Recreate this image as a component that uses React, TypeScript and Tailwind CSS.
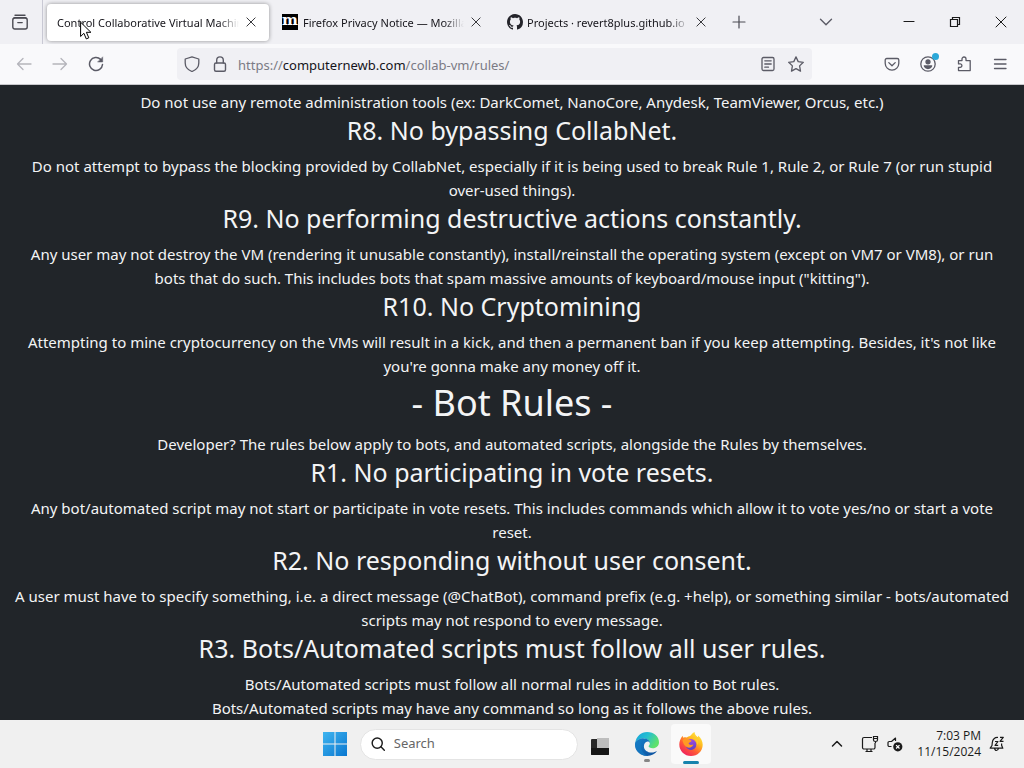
import React from "react";

type Rule = { title: string; lines: string[] };

const userRules: Rule[] = [
  {
    title: "R8. No bypassing CollabNet.",
    lines: [
      "Do not attempt to bypass the blocking provided by CollabNet, especially if it is being used to break Rule 1, Rule 2, or Rule 7 (or run stupid",
      "over-used things).",
    ],
  },
  {
    title: "R9. No performing destructive actions constantly.",
    lines: [
      "Any user may not destroy the VM (rendering it unusable constantly), install/reinstall the operating system (except on VM7 or VM8), or run",
      "bots that do such. This includes bots that spam massive amounts of keyboard/mouse input (\"kitting\").",
    ],
  },
  {
    title: "R10. No Cryptomining",
    lines: [
      "Attempting to mine cryptocurrency on the VMs will result in a kick, and then a permanent ban if you keep attempting. Besides, it's not like",
      "you're gonna make any money off it.",
    ],
  },
];

const botRules: Rule[] = [
  {
    title: "R1. No participating in vote resets.",
    lines: [
      "Any bot/automated script may not start or participate in vote resets. This includes commands which allow it to vote yes/no or start a vote",
      "reset.",
    ],
  },
  {
    title: "R2. No responding without user consent.",
    lines: [
      "A user must have to specify something, i.e. a direct message (@ChatBot), command prefix (e.g. +help), or something similar - bots/automated",
      "scripts may not respond to every message.",
    ],
  },
  {
    title: "R3. Bots/Automated scripts must follow all user rules.",
    lines: [
      "Bots/Automated scripts must follow all normal rules in addition to Bot rules.",
      "Bots/Automated scripts may have any command so long as it follows the above rules.",
    ],
  },
];

function Icon({ children, className = "size-4", sw = 1.3 }: { children: React.ReactNode; className?: string; sw?: number }) {
  return (
    <svg viewBox="0 0 16 16" className={className} fill="none" stroke="currentColor" strokeWidth={sw} strokeLinecap="round" strokeLinejoin="round" aria-hidden="true">
      {children}
    </svg>
  );
}

function CloseIcon() {
  return (
    <Icon className="size-3" sw={1.3}>
      <path d="M2.5 2.5l11 11M13.5 2.5l-11 11" />
    </Icon>
  );
}

function Tab({ title, icon, active = false }: { title: string; icon?: React.ReactNode; active?: boolean }) {
  return (
    <div
      className={
        active
          ? "flex h-[37px] w-[222px] items-center rounded bg-white pr-3 pl-[10px] shadow-[0_0_4px_rgba(0,0,0,0.4)]"
          : "flex h-[37px] w-[225px] items-center pr-3 pl-[13px]"
      }
    >
      {icon}
      <button className="min-w-0 flex-1 overflow-hidden pt-[2px] text-left text-[11px] whitespace-nowrap [mask-image:linear-gradient(to_left,transparent,black_20px)]">
        {title}
      </button>
      <button aria-label={"Close " + title} className="ml-[6px] text-[#333338]">
        <CloseIcon />
      </button>
    </div>
  );
}

function MozillaLogo() {
  return (
    <span aria-hidden="true" className="mr-[5px] flex size-4 shrink-0 items-center justify-center bg-black pb-[3px] font-['DejaVu_Serif',serif] text-[15px] leading-none font-bold text-white">
      m
    </span>
  );
}

function GithubLogo() {
  return (
    <svg viewBox="0 0 16 16" className="mr-1 size-4 shrink-0" fill="#24242b" aria-hidden="true">
      <path d="M8 0C3.58 0 0 3.58 0 8c0 3.54 2.29 6.53 5.47 7.59.4.07.55-.17.55-.38 0-.19-.01-.82-.01-1.49-2.01.37-2.53-.49-2.69-.94-.09-.23-.48-.94-.82-1.13-.28-.15-.68-.52-.01-.53.63-.01 1.08.58 1.23.82.72 1.21 1.87.87 2.33.66.07-.52.28-.87.51-1.07-1.78-.2-3.64-.89-3.64-3.95 0-.87.31-1.59.82-2.15-.08-.2-.36-1.02.08-2.12 0 0 .67-.21 2.2.82.64-.18 1.32-.27 2-.27s1.36.09 2 .27c1.53-1.04 2.2-.82 2.2-.82.44 1.1.16 1.92.08 2.12.51.56.82 1.27.82 2.15 0 3.07-1.87 3.75-3.65 3.95.29.25.54.73.54 1.48 0 1.07-.01 1.93-.01 2.2 0 .21.15.46.55.38A8.01 8.01 0 0 0 16 8c0-4.42-3.58-8-8-8z" />
    </svg>
  );
}

function TabStrip() {
  return (
    <div className="flex h-11 shrink-0 items-center bg-[#f0f0f4] text-[#15141a]">
      <div className="flex h-full w-[43px] shrink-0 items-center justify-center border-r border-[#c9c9d4] pr-[2px] text-[#4a4a52]">
        <button aria-label="Firefox View">
          <Icon sw={1.4}>
            <path d="M3 1.2h10" />
            <rect x="0.8" y="4" width="14.4" height="11" rx="2" />
            <path d="M1.5 4.5Q2 3.6 3 3.6h10Q14 3.6 14.5 4.5M5.8 8.6h4.4" />
          </Icon>
        </button>
      </div>
      <div className="ml-1 flex">
        <Tab title="Control Collaborative Virtual Machines" active />
        <Tab title="Firefox Privacy Notice — Mozilla" icon={<MozillaLogo />} />
        <Tab title="Projects · revert8plus.github.io" icon={<GithubLogo />} />
      </div>
      <button aria-label="New tab" className="ml-3 text-[#4a4a52]">
        <Icon className="size-4" sw={1.2}>
          <path d="M2 8h12M8 2v12" />
        </Icon>
      </button>
      <div className="flex flex-1 items-center justify-end text-[#1a1a1a]">
        <button aria-label="List all tabs" className="mr-[67px] text-[#5b5b66]">
          <Icon sw={1.4}>
            <path d="M2.5 5.2L8 10.7l5.500-5.500" />
          </Icon>
        </button>
        <button aria-label="Minimize" className="mr-[30px]">
          <Icon sw={1.2}>
            <path d="M3 7.500h10" />
          </Icon>
        </button>
        <button aria-label="Restore" className="mr-[30px]">
          <Icon sw={1.2}>
            <path d="M3.500 5.500h7v7h-7zM5.500 5.500v-2h7v7h-2" strokeLinejoin="miter" />
          </Icon>
        </button>
        <button aria-label="Close window" className="mr-[15px]">
          <Icon sw={1}>
            <path d="M3 3l10 10M13 3L3 13" />
          </Icon>
        </button>
      </div>
    </div>
  );
}

function NavBar() {
  return (
    <div className="flex h-[41px] shrink-0 items-center border-b border-[#c8c8cc] bg-[#f9f9fb] text-[#5b5b66]">
      <button aria-label="Back" className="ml-4 text-[#b5b5bb]">
        <Icon>
          <path d="M15 8H1.500M7 2.500L1.500 8L7 13.500" />
        </Icon>
      </button>
      <button aria-label="Forward" className="ml-5 text-[#b5b5bb]">
        <Icon>
          <path d="M1 8h13.500M9 2.500L14.500 8L9 13.500" />
        </Icon>
      </button>
      <button aria-label="Reload" className="ml-5">
        <Icon sw={1.5}>
          <path d="M14.500 8.500A6.500 6.500 0 1 1 12.600 3.400" />
          <path d="M14.700 1.200v4.800H9.900z" fill="currentColor" strokeWidth={0.5} />
        </Icon>
      </button>
      <div className="ml-[73px] flex h-8 flex-1 items-center rounded bg-[#f0f0f4] pr-2 pl-[7px]">
        <button aria-label="Tracking protection">
          <Icon>
            <path d="M8 .8L14.800 3v4c0 4-2.900 7-6.800 8.500C4.100 14 1.200 11 1.200 7V3z" />
          </Icon>
        </button>
        <button aria-label="Site information" className="ml-3">
          <Icon sw={1.4}>
            <rect x="2.500" y="7" width="11" height="8.200" rx="1.500" />
            <path d="M4.700 7V4.200a3.300 3.300 0 0 1 6.600 0V7" />
          </Icon>
        </button>
        <div className="ml-[10px] flex-1 pt-[3px] text-[13px] whitespace-nowrap text-[#7b7b85]">
          https://<span className="text-[#15141a]">computernewb.com</span>/collab-vm/rules/
        </div>
        <button aria-label="Reader view">
          <Icon>
            <rect x="2" y="1.500" width="12" height="13" rx="1.500" />
            <path d="M4.800 4.800h6.400M4.800 8h6.400M4.800 11.200h3.700" />
          </Icon>
        </button>
        <button aria-label="Bookmark this page" className="ml-3">
          <Icon>
            <path d="M8 .9l2.200 4.700 5.100.7-3.700 3.600.9 5.200L8 12.600l-4.500 2.500.9-5.200L.7 6.300l5.100-.7z" />
          </Icon>
        </button>
      </div>
      <button aria-label="Save to Pocket" className="ml-[72px]">
        <Icon>
          <path d="M2.800 2.500h10.400a1.600 1.600 0 0 1 1.600 1.600v3.200a6.800 6.800 0 0 1-13.600 0V4.100a1.600 1.600 0 0 1 1.600-1.600zM4.800 6.600L8 9.700l3.200-3.100" />
        </Icon>
      </button>
      <button aria-label="Account" className="relative ml-5">
        <Icon>
          <circle cx="8" cy="8" r="7.200" />
          <circle cx="8" cy="5.800" r="2" fill="currentColor" />
          <path d="M4.300 9.900h7.400Q10.800 12.500 8 12.500T4.300 9.900z" fill="currentColor" />
        </Icon>
        <span className="absolute -top-[3px] -right-[3px] size-[7px] rounded-full bg-[#2ba8d8]" />
      </button>
      <button aria-label="Extensions" className="ml-5">
        <Icon>
          <path d="M6 4.600V3a2 2 0 0 1 4 0v1.600h4.200v10H2.500v-3.300h1.700a1.700 1.700 0 0 0 0-3.400H2.500V4.600z" />
        </Icon>
      </button>
      <button aria-label="Menu" className="mr-4 ml-5">
        <Icon>
          <path d="M2.500 3.500h11.500M2.500 8h11.500M2.500 12.500h11.500" />
        </Icon>
      </button>
    </div>
  );
}

function RuleBlock({ title, lines }: Rule) {
  return (
    <section>
      <h3 className="mb-2 text-[25px] leading-8">{title}</h3>
      <p>
        {lines[0]}
        <br />
        {lines[1]}
      </p>
    </section>
  );
}

function Taskbar() {
  return (
    <footer className="flex h-12 shrink-0 items-center bg-[#f0f0f0] text-[#1b1b1b]">
      <button aria-label="Start" className="ml-[31.500%]">
        <svg viewBox="0 0 24 24" className="size-6" aria-hidden="true">
          <defs>
            <linearGradient id="win" x1="0" y1="0" x2="1" y2="1" gradientUnits="objectBoundingBox">
              <stop offset="0" stopColor="#3fb5f0" />
              <stop offset="1" stopColor="#0a77d0" />
            </linearGradient>
          </defs>
          <path d="M0 0h11.500v11.500H0zM12.500 0H24v11.500H12.500zM0 12.500h11.500V24H0zM12.500 12.500H24V24H12.500z" fill="url(#win)" />
        </svg>
      </button>
      <label className="ml-[13px] flex h-[31px] w-[218px] items-center rounded-full border border-[#e4e4e4] bg-white pl-[10px]">
        <Icon sw={1.6}>
          <circle cx="7" cy="7" r="5.700" />
          <path d="M11.200 11.200l3.800 3.800" />
        </Icon>
        <input aria-label="Search" placeholder="Search" className="ml-[9px] w-full min-w-0 bg-transparent text-[13px] outline-none placeholder:text-[#666]" />
      </label>
      <button aria-label="Task view" className="ml-[13px] pt-1">
        <svg viewBox="0 0 18 17" className="h-[17px] w-[18px]" aria-hidden="true">
          <rect y="1" width="18" height="16" rx="1" fill="#272727" />
          <path d="M6 0h12v10H6z" fill="#bdbdbd" />
          <path d="M0 10h18v6a1 1 0 0 1-1 1H1a1 1 0 0 1-1-1z" fill="#161616" />
        </svg>
      </button>
      <button aria-label="Microsoft Edge" className="relative ml-[26px]">
        <svg viewBox="0 0 24 24" className="size-6" aria-hidden="true">
          <defs>
            <linearGradient id="edgeTop" x1="0" y1="0" x2="1" y2="0.500">
              <stop offset="0" stopColor="#149fdc" />
              <stop offset="0.500" stopColor="#25bfd0" />
              <stop offset="1" stopColor="#5ee26a" />
            </linearGradient>
            <linearGradient id="edgeLow" x1="0" y1="0" x2="1" y2="1">
              <stop offset="0" stopColor="#1681cb" />
              <stop offset="1" stopColor="#0c4d9b" />
            </linearGradient>
          </defs>
          <path d="M.2 11C1 4.500 6 0 12.200 0 19 0 24 4.800 24 10.200c0 3.600-2.700 6-6.200 6-2.600 0-4.200-1-4.200-1.900 0-.5 1.200-1.100 1.200-3 0-2.600-2.700-4.800-6.200-4.800C4.600 6.500 1.200 8.600.2 11z" fill="url(#edgeTop)" />
          <path d="M.2 11C1.200 8.600 4.600 6.500 8.800 6.500c3.500 0 6 2 6.200 4.600-.3-1-1.300-1.700-2.500-1.700-2 0-3.600 2.200-3.600 4.900 0 4 3.700 6.300 7.600 6.300 2.300 0 4.200-.7 5.600-1.500-2 3-5.600 4.900-10 4.900C5.500 24 0 18.800 0 12.500z" fill="url(#edgeLow)" />
          <path d="M8.800 6.500c-4 2.800-4.800 13 3.500 17.400C5.500 24 0 18.800 0 12.500L.2 11c1-2.400 4.400-4.500 8.600-4.500z" fill="#1478c2" opacity="0.750" />
        </svg>
        <span className="absolute -bottom-[6px] left-[9px] h-[3px] w-[6px] rounded-full bg-[#858585]" />
      </button>
      <button aria-label="Firefox" className="relative ml-3 flex h-10 w-10 items-center justify-center rounded bg-[#fafafa]">
        <svg viewBox="0 0 24 24" className="size-6" aria-hidden="true">
          <defs>
            <linearGradient id="fox" x1="0.900" y1="0" x2="0.200" y2="1">
              <stop offset="0" stopColor="#fff04f" />
              <stop offset="0.350" stopColor="#ffbd20" />
              <stop offset="0.650" stopColor="#ff5b36" />
              <stop offset="1" stopColor="#ee1a63" />
            </linearGradient>
            <linearGradient id="globe" x1="0" y1="0" x2="0" y2="1">
              <stop offset="0" stopColor="#a44be0" />
              <stop offset="1" stopColor="#5940c8" />
            </linearGradient>
          </defs>
          <path d="M15.500 0c.3 2.500 1.500 3.600 3.100 5.100.6-.1.600-1 .500-1.600 2.900 2.500 4.600 5.700 4.600 9.200C23.700 19.100 18.500 24 12 24S.3 19.100.3 12.500c0-3.100 1.200-6.200 3.300-8.800.100.900.4 1.400.8 2 1.300-.5 2.200-.5 3.300-.1 1.100-1 2.300-1.600 3.300-1.700C12.300 3.500 12.900 1 15.500 0z" fill="url(#fox)" />
          <circle cx="12" cy="12.500" r="5.400" fill="url(#globe)" />
          <path d="M3.500 8.200c2.200-2.300 5-1.800 6.400-.2 1.600 0 2.900.2 2.600 1-.4 1.100-2.700 1.200-2.900 2.300.700 2.500 3.400 1.500 4.900 1.200-1 3.100-5 4.100-7.700 2.100C4.900 13 4 10.600 3.500 8.200z" fill="#ff9a24" />
          <path d="M12.600 6.500c4.200-.2 6.300 3.600 4.900 7.300 2.500-2.200 2.300-5.500.7-7.700z" fill="#ffcb2e" />
        </svg>
        <span className="absolute bottom-0 left-3 h-[3px] w-4 rounded-full bg-[#1683ad]" />
      </button>
      <div className="flex flex-1 items-center justify-end">
        <button aria-label="Show hidden icons" className="mr-4">
          <Icon className="size-4" sw={1.5}>
            <path d="M3.500 10l4.500-4.500 4.500 4.500" />
          </Icon>
        </button>
        <button aria-label="Network" className="mr-2">
          <svg viewBox="0 0 18 18" className="size-[18px]" fill="none" stroke="currentColor" strokeWidth="1.200" aria-hidden="true">
            <path d="M11 2.500H3A1.500 1.500 0 0 0 1.500 4v8.500A1.500 1.500 0 0 0 3 14h9.500a1.500 1.500 0 0 0 1.500-1.500V8M6 14v2.500M10 14v2.500M4.500 16.500h7" />
            <path d="M12.500 1.500h4V5q0 1.500-2 1.500t-2-1.500zM12.500 3.500h4M14.500 6.500V8" />
          </svg>
        </button>
        <button aria-label="Volume muted" className="mr-[14px]">
          <svg viewBox="0 0 16 16" className="size-4" fill="none" stroke="currentColor" strokeWidth="1.200" aria-hidden="true">
            <path d="M8.500 5V2L4.500 5.500H2.300A1.300 1.300 0 0 0 1 6.800v2.400a1.300 1.300 0 0 0 1.300 1.300H4.500" strokeLinejoin="round" />
            <circle cx="10.800" cy="10.800" r="4.600" fill="currentColor" stroke="none" />
            <path d="M9.100 9.100l3.400 3.400M12.500 9.100l-3.400 3.400" stroke="white" />
          </svg>
        </button>
        <div className="text-right font-['Open_Sans',sans-serif] text-xs leading-4">
          <div>7:03 PM</div>
          <div>11/15/2024</div>
        </div>
        <button aria-label="Notifications" className="mr-[19px] ml-2">
          <svg viewBox="0 0 16 16" className="size-4" fill="none" stroke="currentColor" strokeWidth="1.200" strokeLinejoin="round" aria-hidden="true">
            <path d="M9 1.500C5.800 1.200 3.500 3.300 3.300 6.500L3 9.500 1.200 12.200h12.600L12.600 9.300V7.500M5.500 12.200Q5.800 14.500 7.500 14.500T9.500 12.200" />
            <path d="M6 5.500h3L6 9.300h3.200M11 1.300h3.300L11 5.300h3.500" />
          </svg>
        </button>
      </div>
    </footer>
  );
}

export default function App() {
  return (
    <div className="relative flex h-screen flex-col overflow-hidden font-['Noto_Sans',sans-serif]">
      <TabStrip />
      <NavBar />
      <main className="min-h-0 flex-1 overflow-hidden bg-[#212529] pt-[5px] text-center text-[15px] leading-6 whitespace-nowrap text-[#f3f4f5]">
        <p>Do not use any remote administration tools (ex: DarkComet, NanoCore, Anydesk, TeamViewer, Orcus, etc.)</p>
        {userRules.map((rule) => (
          <RuleBlock key={rule.title} {...rule} />
        ))}
        <h2 className="mb-1 text-4xl leading-[50px]">- Bot Rules -</h2>
        <p>Developer? The rules below apply to bots, and automated scripts, alongside the Rules by themselves.</p>
        {botRules.map((rule) => (
          <RuleBlock key={rule.title} {...rule} />
        ))}
      </main>
      <Taskbar />
      <svg viewBox="0 0 12 19" className="pointer-events-none absolute top-[21px] left-[80px] h-[19px] w-3" aria-hidden="true">
        <path d="M.6 1.200v14.300l3.300-3.200 2.400 5.600 2.500-1.100-2.400-5.500h4.500z" fill="white" stroke="black" />
      </svg>
    </div>
  );
}
